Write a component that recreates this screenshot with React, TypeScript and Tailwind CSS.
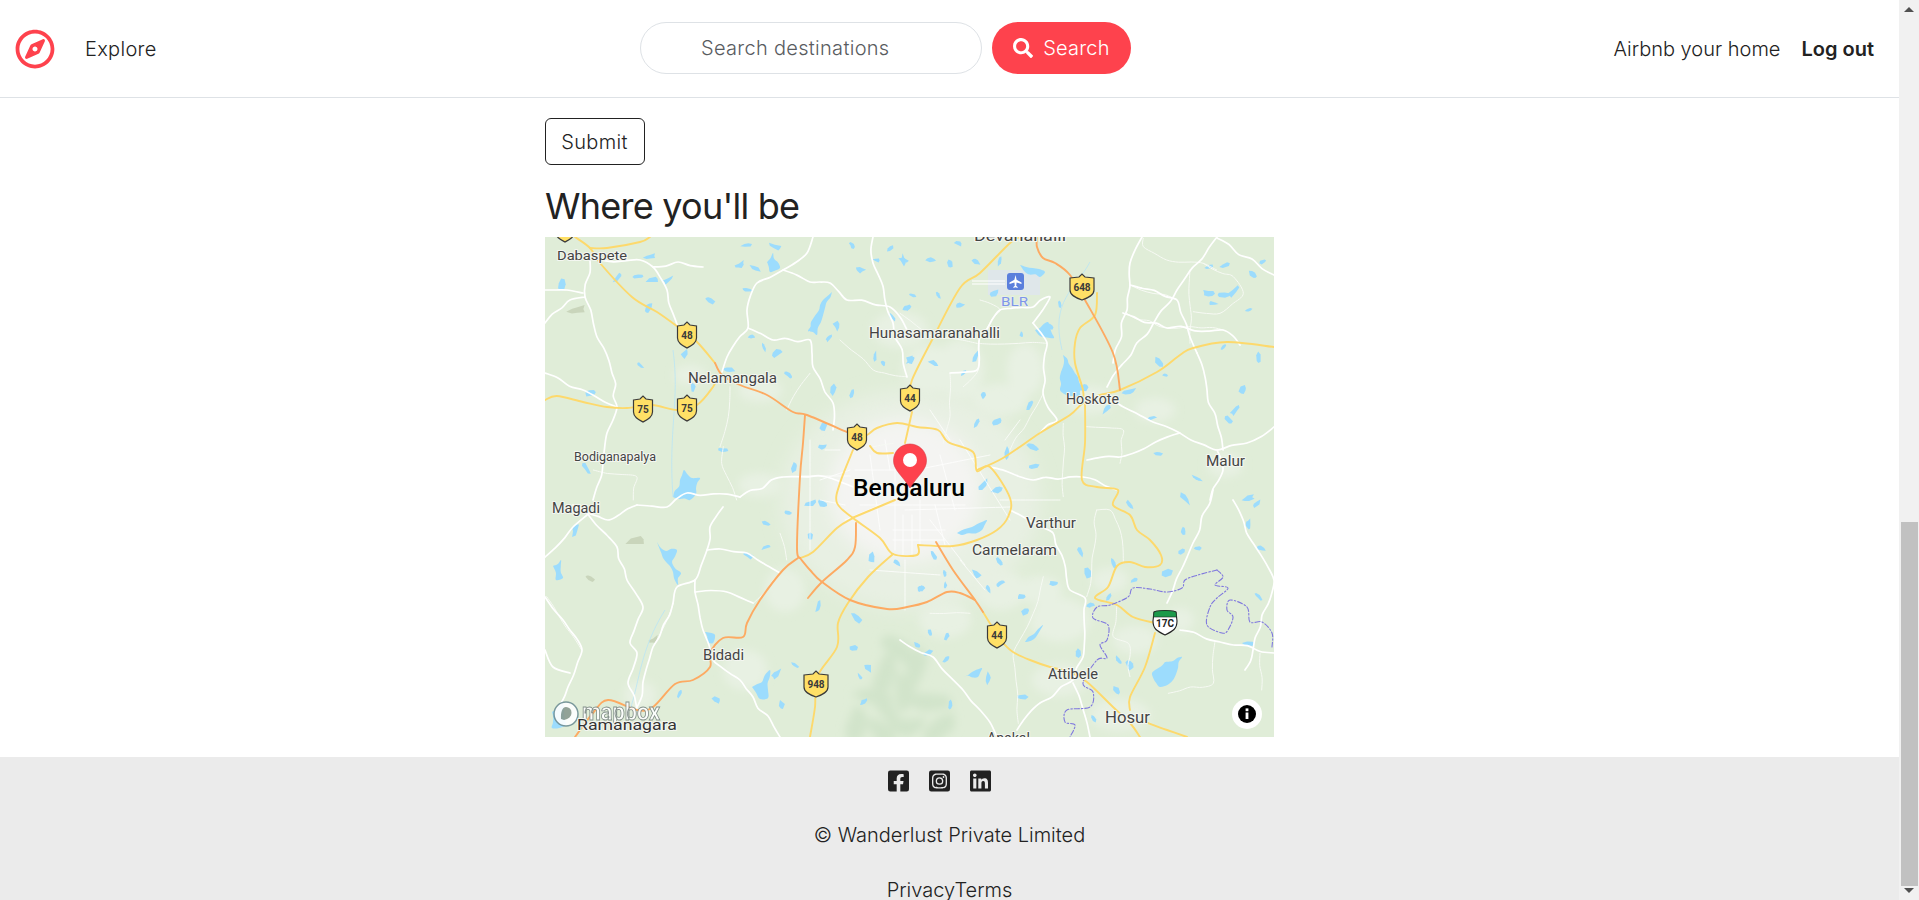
import React from 'react';
import { FaRegCompass, FaSearch, FaLinkedin, FaFacebookSquare, FaInstagramSquare } from 'react-icons/fa';

type Pt = number[];

const from = (ox: number, oy: number, pts: Pt[]) => pts.map(([x, y]) => [ox + x / 3, oy + y / 3]);

// small repeatable noise, so the map is drawn the same on every load
const noise = (n: number) => {
  const v = Math.sin(n * 127.1 + 311.7) * 43758.5453;
  return v - Math.floor(v);
};

// catmull-rom through the points
const smooth = (pts: Pt[]) => {
  let d = `M${pts[0][0].toFixed(1)},${pts[0][1].toFixed(1)}`;
  for (let i = 0; i < pts.length - 1; i++) {
    const p0 = pts[i - 1] || pts[i];
    const p1 = pts[i];
    const p2 = pts[i + 1];
    const p3 = pts[i + 2] || p2;
    const c1 = [p1[0] + (p2[0] - p0[0]) / 6, p1[1] + (p2[1] - p0[1]) / 6];
    const c2 = [p2[0] - (p3[0] - p1[0]) / 6, p2[1] - (p3[1] - p1[1]) / 6];
    d += ` C${c1[0].toFixed(1)},${c1[1].toFixed(1)} ${c2[0].toFixed(1)},${c2[1].toFixed(1)} ${p2[0].toFixed(1)},${p2[1].toFixed(1)}`;
  }
  return d;
};

// adds small bends to a long road
const wiggle = (pts: Pt[], seed: number, amp = 2.2, step = 13) => {
  const out: Pt[] = [pts[0]];
  for (let i = 0; i < pts.length - 1; i++) {
    const [ax, ay] = pts[i];
    const [bx, by] = pts[i + 1];
    const len = Math.hypot(bx - ax, by - ay);
    const n = Math.max(1, Math.round(len / step));
    for (let k = 1; k <= n; k++) {
      const t = k / n;
      const j = k === n ? 0 : amp * (noise(seed * 13 + i * 7 + k) - 0.5) * 2;
      out.push([ax + (bx - ax) * t + (-(by - ay) / len) * j, ay + (by - ay) * t + ((bx - ax) / len) * j]);
    }
  }
  return out;
};

const blob = (x: number, y: number, r: number, seed: number) => {
  const n = 6 + (seed % 3);
  const stretch = 0.6 + noise(seed) * 0.9;
  const rot = noise(seed + 4) * Math.PI;
  const pts: string[] = [];
  for (let i = 0; i < n; i++) {
    const a = (i / n) * Math.PI * 2;
    const rr = r * (0.55 + noise(seed * 3 + i) * 0.75);
    const px = Math.cos(a) * rr * (1 + stretch * 0.5);
    const py = Math.sin(a) * rr * (1 - stretch * 0.25);
    pts.push(`${(x + px * Math.cos(rot) - py * Math.sin(rot)).toFixed(1)},${(y + px * Math.sin(rot) + py * Math.cos(rot)).toFixed(1)}`);
  }
  return pts.join(' ');
};

const lakeShape = (pts: Pt[], seed: number) => {
  const closed = [...pts, pts[0]];
  return smooth(wiggle(closed, seed, 1.8, 6)) + 'Z';
};

const whiteRoads: Pt[][] = [
  [[590, 260], [585, 297], [597, 337], [612, 373], [617, 407], [607, 433], [603, 463], [593, 500]],
  [[545, 290], [567, 290], [583, 293]],
  [[545, 323], [570, 300], [585, 297]],
  [[545, 373], [583, 390], [617, 407]],
  [[600, 260], [640, 260], [653, 267], [667, 290], [678, 327]],
  [[653, 267], [678, 262], [703, 267]],
  [[813, 237], [807, 253], [783, 270], [757, 283], [747, 310], [748, 328], [727, 357], [722, 372]],
  [[748, 328], [773, 340], [810, 340], [813, 367], [833, 403], [833, 430]],
  [[783, 270], [810, 282], [830, 283], [847, 300], [890, 307], [907, 330]],
  [[873, 237], [873, 263], [893, 323], [907, 377]],
  [[740, 497], [783, 477], [830, 478], [853, 487]],
  [[545, 597], [563, 620], [582, 650], [568, 687], [560, 705]],
  [[587, 513], [617, 547], [627, 580], [643, 607], [630, 643], [637, 653], [628, 683], [637, 710]],
  [[637, 505], [608, 520], [588, 513], [573, 505]],
  [[637, 505], [667, 507], [687, 493], [740, 497]],
  [[545, 557], [573, 527], [587, 515]],
  [[723, 507], [710, 527], [707, 550], [695, 580], [677, 587], [673, 603], [653, 647], [637, 707]],
  [[707, 550], [747, 553], [780, 573]],
  [[695, 580], [695, 592], [703, 630], [713, 660], [740, 680], [753, 697], [780, 737]],
  [[695, 592], [727, 592], [753, 603]],
  [[545, 650], [553, 667], [570, 673]],
  [[1217, 237], [1177, 290], [1107, 387]],
  [[1142, 237], [1130, 263], [1127, 310], [1113, 363]],
  [[1217, 238], [1274, 275]],
  [[1113, 400], [1153, 422], [1217, 450], [1247, 443], [1274, 427]],
  [[1217, 450], [1223, 470], [1210, 500]],
  [[1033, 323], [1047, 343], [1043, 393], [1057, 420], [1040, 433]],
  [[1033, 323], [1050, 297], [1033, 307], [1000, 310], [980, 337], [977, 370], [950, 373]],
  [[990, 467], [1033, 480], [1083, 477], [1117, 490]],
  [[1087, 460], [1120, 457], [1180, 433]],
  [[1197, 353], [1207, 390], [1223, 450]],
  [[1123, 313], [1167, 328], [1223, 330], [1240, 345]],
  [[1130, 285], [1177, 300], [1190, 337], [1197, 353]],
  [[1010, 510], [1053, 533], [1070, 590], [1085, 598], [1083, 657], [1073, 680], [1040, 703], [1017, 730]],
  [[900, 640], [933, 657], [963, 690], [980, 710], [997, 737]],
  [[1180, 630], [1220, 642], [1274, 653]],
  [[1213, 490], [1193, 543], [1167, 603]],
  [[1233, 500], [1253, 543], [1274, 580], [1253, 650], [1245, 670]],
  [[1073, 683], [1090, 737]],
];

// minor roads, thinner than the white ones above
const minorRoads: Pt[][] = [
  from(900, 230, [[690, 165], [830, 210]]),
  from(900, 230, [[680, 250], [780, 290], [870, 290], [970, 300]]),
  from(900, 230, [[880, 245], [960, 250], [1030, 190], [1000, 140], [910, 100]]),
  from(900, 230, [[730, 25], [730, 50], [800, 90], [910, 100], [950, 120]]),
  from(900, 230, [[870, 120], [870, 340]]),
  from(900, 230, [[240, 210], [300, 240], [240, 320], [235, 420], [190, 470]]),
  from(900, 230, [[150, 430], [150, 560], [130, 640]]),
  from(900, 230, [[330, 660], [430, 490]]),
  from(900, 230, [[490, 580], [490, 800]]),
  from(900, 230, [[560, 590], [670, 600], [660, 700]]),
  from(900, 230, [[0, 250], [100, 320], [230, 340]]),
  from(900, 230, [[230, 340], [440, 340]]),
  from(900, 490, [[590, 60], [630, 60], [660, 120], [670, 220]]),
  from(900, 490, [[590, 60], [575, 240], [560, 320]]),
  from(900, 490, [[650, 350], [640, 440], [685, 460], [690, 560]]),
  from(900, 490, [[805, 610], [940, 580], [945, 455]]),
  from(900, 490, [[1080, 490], [1085, 600]]),
  from(900, 490, [[90, 370], [210, 370]]),
  from(900, 490, [[430, 260], [400, 370], [340, 490], [355, 700]]),
  from(540, 230, [[550, 650], [545, 700], [590, 810]]),
  from(540, 230, [[570, 470], [565, 560], [540, 650]]),
  from(540, 230, [[160, 720], [290, 740], [280, 810]]),
  from(540, 230, [[810, 430], [760, 500], [740, 540]]),
  from(540, 230, [[1000, 650], [1060, 640]]),
  from(540, 230, [[900, 330], [1000, 420], [1100, 440]]),
  from(540, 490, [[400, 340], [340, 470]]),
  from(540, 490, [[640, 340], [680, 300], [720, 250]]),
  from(540, 490, [[720, 130], [740, 210]]),
  from(540, 490, [[20, 320], [100, 440], [125, 480]]),
];

// thin streets inside the city
const cityStreets: Pt[][] = [
  [[800, 476], [850, 476]], [[905, 510], [1010, 507]], [[915, 470], [990, 455]], [[960, 440], [1010, 520]],
  [[870, 455], [880, 530]], [[895, 455], [895, 550]], [[920, 500], [920, 545]], [[935, 505], [945, 545]],
  [[845, 520], [880, 505]], [[893, 530], [945, 530]], [[893, 540], [945, 540]], [[903, 515], [903, 555]],
  [[912, 515], [912, 555]], [[930, 520], [965, 565]], [[810, 440], [810, 550]], [[820, 480], [850, 470]],
  [[820, 500], [845, 505]], [[825, 450], [840, 450]], [[870, 570], [940, 575]], [[905, 560], [905, 610]],
  [[960, 560], [985, 590]], [[1000, 500], [1060, 500]], [[1005, 440], [1020, 420]], [[930, 410], [950, 440]],
  [[855, 470], [900, 470]], [[860, 505], [965, 505]], [[940, 455], [955, 510]], [[885, 440], [890, 470]],
];

const yellowRoads: Pt[][] = [
  [[575, 237], [590, 248], [600, 263], [632, 297], [657, 312], [678, 327], [697, 342], [715, 363]],
  [[590, 248], [607, 248], [640, 242], [650, 237]],
  [[545, 400], [557, 396], [583, 402], [607, 407], [627, 408], [652, 405], [677, 410], [697, 405], [713, 387], [717, 378]],
  [[857, 437], [867, 435], [877, 428], [897, 423], [917, 427], [938, 430], [948, 442], [973, 452], [977, 471], [990, 467], [1010, 498], [1008, 517], [997, 530], [977, 540], [953, 546], [918, 545]],
  [[918, 545], [917, 555], [893, 554], [880, 538], [853, 518], [837, 503], [840, 483], [853, 450]],
  [[870, 446], [877, 453], [893, 453]],
  [[912, 412], [905, 443]],
  [[910, 397], [912, 380], [932, 340], [960, 288], [980, 273], [1010, 243], [1020, 237]],
  [[853, 518], [837, 528], [813, 552], [800, 558]],
  [[852, 518], [895, 500]],
  [[893, 554], [868, 577], [848, 603], [838, 623], [837, 647], [817, 677], [815, 707], [810, 737]],
  [[977, 470], [1003, 458], [1040, 433], [1070, 415], [1083, 403], [1100, 395], [1120, 390], [1157, 372], [1180, 355], [1193, 348], [1227, 342], [1274, 347]],
  [[1083, 403], [1083, 390], [1075, 363], [1075, 343], [1080, 328], [1095, 315], [1097, 293]],
  [[1085, 403], [1085, 443], [1082, 480], [1097, 487], [1118, 490], [1113, 505], [1130, 515], [1137, 530], [1150, 540], [1161, 555], [1160, 565], [1145, 567], [1130, 562], [1117, 566], [1108, 587], [1095, 598], [1117, 605], [1133, 617], [1155, 623]],
  [[1155, 633], [1145, 667], [1130, 697], [1130, 710]],
  [[1003, 643], [1013, 652], [1030, 660], [1050, 667], [1070, 672], [1087, 682], [1113, 707], [1130, 723], [1140, 737]],
  [[1148, 723], [1167, 730], [1187, 737]],
  [[983, 612], [997, 635]],
];

const orangeRoads: Pt[][] = [
  [[715, 363], [722, 375], [740, 385], [767, 395], [793, 412], [807, 415], [847, 432]],
  [[805, 415], [803, 443], [800, 477], [797, 547], [800, 558]],
  [[798, 558], [783, 570], [760, 600], [747, 623], [743, 637], [723, 638], [710, 653], [710, 667], [693, 680], [675, 684], [653, 707], [637, 710], [608, 700], [593, 713], [575, 737]],
  [[800, 558], [810, 570], [822, 582], [850, 600], [887, 609], [907, 607], [927, 602], [947, 592], [960, 593], [975, 600]],
  [[808, 598], [822, 582], [847, 560], [855, 547], [856, 523]],
  [[936, 542], [953, 570], [975, 600], [983, 612]],
  [[1037, 237], [1037, 247], [1043, 258], [1055, 263], [1070, 275], [1085, 300], [1113, 353], [1120, 390]],
];

const border: Pt[][] = [
  [[1217, 570], [1223, 577], [1215, 585], [1228, 588], [1217, 598], [1210, 607], [1207, 625], [1222, 633], [1228, 630], [1233, 617], [1227, 610], [1230, 600], [1247, 607], [1250, 622], [1262, 622], [1272, 633], [1272, 647]],
  [[1217, 570], [1198, 575], [1185, 580], [1182, 588], [1167, 592], [1150, 589], [1133, 588], [1128, 597], [1110, 605], [1097, 607], [1093, 618], [1108, 625], [1107, 640], [1100, 645], [1107, 658], [1097, 660], [1083, 683], [1093, 692], [1090, 707], [1067, 710], [1065, 722], [1075, 725], [1070, 737]],
];

const bigLakes: Pt[][] = [
  [[832, 292], [823, 300], [819, 310], [811, 322], [808, 331], [817, 335], [821, 322], [825, 308]],
  [[1063, 355], [1072, 368], [1082, 387], [1081, 398], [1070, 396], [1060, 390], [1061, 372]],
  [[673, 497], [680, 480], [684, 470], [692, 478], [700, 478], [696, 494], [690, 500]],
  [[657, 542], [666, 551], [677, 550], [672, 562], [681, 573], [678, 585], [673, 572], [663, 558]],
  [[553, 566], [561, 560], [563, 578], [556, 580]],
  [[705, 632], [715, 635], [713, 643], [707, 642]],
  [[752, 687], [762, 682], [770, 670], [768, 690], [768, 698], [760, 699]],
  [[957, 533], [972, 527], [987, 520], [982, 530], [962, 535]],
  [[1165, 662], [1173, 661], [1182, 657], [1178, 668], [1173, 680], [1160, 687], [1152, 673]],
  [[1025, 642], [1034, 634], [1043, 625], [1036, 637]],
  [[963, 677], [972, 672], [982, 668], [978, 677]],
  [[767, 262], [773, 253], [780, 268], [770, 272]],
  [[1035, 330], [1048, 322], [1054, 338], [1040, 336]],
  [[1020, 265], [1045, 272], [1040, 277], [1025, 272]],
  [[552, 712], [562, 702], [566, 725], [552, 728]],
];

const ponds: Pt[] = [
  ...from(540, 230, [[65, 165], [295, 140], [340, 150], [385, 150], [330, 80], [235, 140], [325, 235], [510, 210], [620, 45], [705, 50], [600, 105], [645, 115], [620, 180], [150, 490], [300, 405], [435, 370], [635, 320], [670, 350], [710, 370], [745, 435], [880, 480], [935, 490], [460, 470], [565, 420], [550, 660], [140, 715], [765, 710], [850, 650], [935, 45], [1050, 55], [1090, 90], [960, 120], [1010, 90], [1055, 260], [1100, 235], [1115, 195], [1110, 390], [1030, 400], [1005, 380], [890, 285], [865, 325], [850, 590]]),
  ...from(900, 230, [[150, 100], [230, 95], [300, 90], [95, 90], [10, 90], [175, 40], [115, 195], [180, 225], [20, 235], [450, 290], [365, 315], [480, 222], [280, 190], [250, 495], [190, 430], [100, 400], [35, 390], [225, 380], [390, 525], [290, 575], [230, 578], [400, 650], [320, 668], [400, 710], [250, 765], [290, 780], [775, 670], [890, 745], [1005, 540], [985, 570], [1030, 480], [1045, 240], [1090, 95], [1060, 135], [930, 110], [975, 105], [970, 195], [925, 190], [940, 220], [1000, 185], [690, 485], [620, 535], [795, 435], [970, 350], [1075, 385], [775, 395], [550, 475], [755, 565]]),
  ...from(540, 490, [[105, 120], [625, 195], [680, 170], [835, 350], [950, 385], [940, 475], [765, 525], [708, 552], [530, 630], [420, 610], [725, 645], [960, 560], [985, 535], [970, 635], [995, 205], [1070, 215], [745, 70], [680, 100], [810, 40], [845, 40], [810, 140]]),
  ...from(900, 490, [[60, 295], [135, 285], [230, 255], [265, 295], [300, 280], [365, 320], [375, 365], [460, 280], [540, 185], [565, 250], [640, 220], [800, 250], [705, 270], [850, 125], [845, 185], [895, 175], [1045, 105], [1085, 175], [1070, 40], [1045, 25], [855, 25], [690, 45], [1075, 320], [1050, 460], [265, 565], [140, 505], [90, 430], [140, 440], [50, 465], [80, 490], [365, 620], [150, 645], [535, 490], [655, 510], [690, 525], [580, 685], [650, 600], [570, 345], [625, 320], [300, 215], [100, 195], [65, 295], [135, 250]]),
];

const forest: Pt[] = [
  [900, 652], [917, 668], [884, 672], [905, 690], [872, 697], [930, 702], [890, 712], [860, 722], [912, 726], [880, 733], [938, 728],
];

const patches: number[][] = [
  [760, 390, 22, 12], [690, 375, 16, 10], [1090, 400, 24, 14], [1025, 370, 18, 26], [1000, 400, 28, 16], [960, 370, 24, 30],
  [1135, 640, 22, 14], [1110, 580, 18, 12], [1060, 620, 30, 22], [1000, 590, 26, 20], [1060, 680, 28, 16], [1120, 715, 30, 16],
  [745, 670, 22, 20], [785, 590, 20, 22], [1180, 620, 14, 12], [945, 620, 26, 18], [1040, 590, 22, 14],
  [760, 485, 22, 12], [640, 695, 16, 14], [900, 330, 28, 18], [930, 370, 28, 24], [1155, 410, 20, 12], [1225, 465, 18, 12],
];

const labels: [string, number, number, number, number][] = [
  ['Dabaspete', 557, 260, 70, 13.5],
  ['Devanahalli', 974, 241, 92, 14],
  ['Hunasamaranahalli', 869, 338, 131, 14],
  ['Nelamangala', 688, 383, 89, 14],
  ['Hoskote', 1066, 404, 53, 14],
  ['Bodiganapalya', 574, 461, 82, 12],
  ['Magadi', 552, 513, 48, 14],
  ['Malur', 1206, 466, 39, 14],
  ['Varthur', 1026, 528, 50, 14],
  ['Carmelaram', 972, 555, 85, 14],
  ['Bidadi', 703, 660, 41, 14],
  ['Attibele', 1048, 679, 50, 14],
  ['Hosur', 1105, 723, 45, 16.5],
  ['Anekal', 987, 743, 43, 14],
];

const shields: [string, number, number, boolean?][] = [
  ['', 565, 229],
  ['48', 687, 335],
  ['75', 643, 409],
  ['75', 687, 408],
  ['44', 910, 398],
  ['48', 857, 437],
  ['648', 1082, 287, true],
  ['948', 816, 684, true],
  ['44', 997, 635],
];

const Shield: React.FC<{ label: string; x: number; y: number; wide?: boolean }> = ({ label, x, y, wide }) => {
  const w = wide ? 12 : 9.5;
  return (
    <g transform={`translate(${x} ${y})`}>
      <path
        d={`M${-w},-9 L-3,-10 L0,-13 L3,-10 L${w},-9 L${w},3 C${w},8 ${w - 5},10.5 0,13 C${5 - w},10.5 ${-w},8 ${-w},3 Z`}
        fill="#ffe066"
        stroke="#3a3a3a"
        strokeWidth="1.2"
      />
      <text x="0" y="3.5" textAnchor="middle" fontSize="10" fontWeight="700" fill="#3a3a3a" fontFamily="Roboto, sans-serif">
        {label}
      </text>
    </g>
  );
};

const MapView: React.FC = () => {
  return (
    <svg viewBox="545 237 729 500" className="block w-[729px] h-[500px]" fontFamily="Roboto, sans-serif">
      <defs>
        <filter id="soft" x="-30%" y="-30%" width="160%" height="160%">
          <feGaussianBlur stdDeviation="4" />
        </filter>
        <filter id="softer" x="-30%" y="-30%" width="160%" height="160%">
          <feGaussianBlur stdDeviation="9" />
        </filter>
      </defs>
      <rect x="545" y="237" width="729" height="500" fill="#e0edd8" />

      {/* forest and hills */}
      <g fill="#d2e4cb" filter="url(#soft)">
        {forest.map(([x, y], i) => (
          <polygon key={i} points={blob(x, y, 14, i + 20)} />
        ))}
      </g>
      <g fill="#c9d5bb">
        <polygon points={blob(637, 541, 6, 3)} />
        <polygon points={blob(577, 310, 6, 5)} />
        <polygon points={blob(590, 578, 4, 8)} />
        <polygon points={blob(654, 640, 4, 11)} />
      </g>

      {/* built up areas */}
      <g fill="#e8f1e3" filter="url(#soft)">
        {patches.map(([x, y, rx, ry], i) => (
          <ellipse key={i} cx={x} cy={y} rx={rx} ry={ry} />
        ))}
      </g>
      <ellipse cx="910" cy="500" rx="130" ry="110" fill="#e8f0e3" filter="url(#softer)" />
      <ellipse cx="905" cy="490" rx="76" ry="72" fill="#f4f4f2" filter="url(#softer)" />

      {/* airport */}
      <rect x="988" y="270" width="52" height="25" fill="#dfe7ea" />
      <path d="M972,281 H1005 M972,284 H1005" stroke="#fff" strokeWidth="1.2" />

      {/* water */}
      <g fill="#9cdcfd">
        {bigLakes.map((pts, i) => (
          <path key={i} d={lakeShape(pts, i + 2)} />
        ))}
        {ponds.map(([x, y], i) => (
          <polygon key={i} points={blob(x, y, 2.6 + noise(i) * 1.8, i + 1)} />
        ))}
      </g>
      <path d="M673,350 C680,400 668,430 673,497 M665,610 C640,650 640,680 630,710 M1062,350 C1050,300 1075,290 1090,262" fill="none" stroke="#b9e5f5" strokeWidth="0.8" />

      {/* roads */}
      <g fill="none" strokeLinejoin="round" strokeLinecap="round">
        <g stroke="#fff" strokeWidth="0.9" opacity="0.85">
          {cityStreets.map((pts, i) => (
            <path key={i} d={smooth(pts)} />
          ))}
        </g>
        <g stroke="#f7faf4" strokeWidth="1">
          {minorRoads.map((pts, i) => (
            <path key={i} d={smooth(wiggle(pts, i + 50, 1.6))} />
          ))}
        </g>
        <g stroke="#fff" strokeWidth="1.7">
          {whiteRoads.map((pts, i) => (
            <path key={i} d={smooth(wiggle(pts, i + 1))} />
          ))}
        </g>
        <g stroke="#fdd96c" strokeWidth="1.9">
          {yellowRoads.map((pts, i) => (
            <path key={i} d={smooth(pts)} />
          ))}
        </g>
        <g stroke="#fdaa62" strokeWidth="1.9">
          {orangeRoads.map((pts, i) => (
            <path key={i} d={smooth(pts)} />
          ))}
        </g>
        <g stroke="#7f78de" strokeWidth="1.1" strokeDasharray="5 2 1.5 2">
          {border.map((pts, i) => (
            <path key={i} d={smooth(pts)} />
          ))}
        </g>
      </g>

      {/* mapbox mark sits under the labels */}
      <g opacity="0.9">
        <circle cx="566" cy="714" r="12" fill="#fff" stroke="#6f8f95" strokeWidth="1.5" />
        <path d="M566,707 a5.5,5.5 0 0 1 5.5,5.5 c0,4 -3,6.5 -7.5,7.5 l-3,-1 c-.5,-6 1,-12 5,-12Z" fill="#8a9a90" />
        <text x="582" y="720" fontSize="23" fontWeight="700" fill="#fff" stroke="#7d8a85" strokeWidth="0.9" textLength="78" lengthAdjust="spacingAndGlyphs">
          mapbox
        </text>
      </g>

      {/* place names */}
      <g fill="#444" stroke="#f4f7f1" strokeWidth="2" strokeLinejoin="round" style={{ paintOrder: 'stroke' }}>
        {labels.map(([name, x, y, w, size]) => (
          <text key={name} x={x} y={y} fontSize={size} textLength={w} lengthAdjust="spacingAndGlyphs">
            {name}
          </text>
        ))}
        <text x="577" y="730" fontSize="15" textLength="100" lengthAdjust="spacingAndGlyphs" fill="#333">
          Ramanagara
        </text>
        <text x="853" y="496" fontSize="24" fontWeight="500" fill="#000" textLength="112" lengthAdjust="spacingAndGlyphs">
          Bengaluru
        </text>
      </g>

      {/* highway shields */}
      {shields.map(([label, x, y, wide], i) => (
        <Shield key={i} label={label} x={x} y={y} wide={wide} />
      ))}
      <g transform="translate(1165 623)">
        <path d="M-11,-11 C-6,-13 6,-13 11,-11 L12,-2 C12,6 8,8 0,12 C-8,8 -12,6 -12,-2 Z" fill="#fff" stroke="#222" strokeWidth="1.1" />
        <path d="M-11,-11 C-6,-13 6,-13 11,-11 L11.6,-6 H-11.6 Z" fill="#1c9a4a" stroke="#222" strokeWidth="0.6" />
        <text x="0" y="4" textAnchor="middle" fontSize="10" fontWeight="700" fill="#222">
          17C
        </text>
      </g>

      {/* airport marker */}
      <rect x="1007" y="273" width="17" height="17" rx="3" fill="#5b7fdc" />
      <path d="M1015.5,275 L1016.6,279.8 L1021.5,282.6 V284 L1016.6,282.6 L1016.2,285.8 L1017.6,287 V288 L1015.5,287.2 L1013.4,288 V287 L1014.8,285.8 L1014.4,282.6 L1009.5,284 V282.6 L1014.4,279.8 Z" fill="#fff" />
      <text x="1001" y="306" fontSize="13" fill="#7e96e8" textLength="27" lengthAdjust="spacingAndGlyphs" stroke="#e8efea" strokeWidth="1.5" style={{ paintOrder: 'stroke' }}>
        BLR
      </text>

      {/* marker */}
      <path d="M910,488 C902,475 893.5,470 893.5,460.5 A16.5,16.5 0 0 1 926.5,460.5 C926.5,470 918,475 910,488Z" fill="#fe424d" stroke="#d63a44" strokeWidth="0.6" />
      <circle cx="910" cy="460" r="7" fill="#fff" />

      {/* attribution button */}
      <circle cx="1247" cy="714" r="15" fill="#fff" />
      <circle cx="1247" cy="714" r="9" fill="#000" />
      <rect x="1245.6" y="712.5" width="2.8" height="6.5" fill="#fff" />
      <rect x="1245.6" y="708.4" width="2.8" height="2.8" fill="#fff" />
    </svg>
  );
};

const App: React.FC = () => {
  return (
    <div className="flex h-screen w-full overflow-hidden bg-white text-[#222222] font-['Inter',sans-serif] text-[20px]">
      <div className="flex-1 min-w-0 flex flex-col">
        {/* Navbar */}
        <nav className="h-[98px] shrink-0 flex items-center border-b border-[#dee2e6] pl-[15px] pr-[25px]">
          <FaRegCompass className="w-10 h-10 text-[#fe424d]" />
          <a className="ml-[30px] w-[71px] font-light tracking-[0.3px]">Explore</a>
          <div className="ml-[484px] -mt-px flex items-center gap-[10px]">
            <div className="w-[342px] h-[52px] rounded-full border border-[#dee2e6] flex items-center pl-[60px] text-[#595c5f] font-light tracking-[0.3px]">
              Search destinations
            </div>
            <button className="w-[139px] h-[52px] rounded-full bg-[#fe424d] text-white flex items-center justify-center gap-[10px] font-light tracking-[0.2px]">
              <FaSearch className="w-5 h-5" />
              Search
            </button>
          </div>
          <div className="ml-auto flex items-center gap-[21px]">
            <a className="font-light">Airbnb your home</a>
            <a className="font-semibold">Log out</a>
          </div>
        </nav>

        {/* Map section */}
        <main className="flex-1 pt-5 pl-[545px]">
          <button className="w-[100px] h-[47px] rounded-md border border-[#222222] font-light tracking-[0.3px] -indent-px">Submit</button>
          <h3 className="mt-[15px] mb-[4px] text-[36px] leading-[53px] font-normal tracking-[-0.75px]">Where you'll be</h3>
          <div className="w-[729px] h-[500px]">
            <MapView />
          </div>
        </main>

        {/* Footer */}
        <footer className="h-[143px] shrink-0 bg-[#ebebeb] overflow-hidden pt-[12px] flex flex-col items-center">
          <div className="flex text-[#222222] h-6 items-center">
            <FaFacebookSquare className="w-[21px] h-6 mr-5" />
            <FaInstagramSquare className="w-[21px] h-6 mr-5" />
            <FaLinkedin className="w-[21px] h-6 mr-5" />
          </div>
          <div className="mt-[27px] font-light leading-[30px]">© Wanderlust Private Limited</div>
          <div className="mt-[25px] font-light leading-[30px]">
            <a>Privacy</a>
            <a>Terms</a>
          </div>
        </footer>
      </div>

      {/* Scrollbar */}
      <div className="w-5 shrink-0 bg-[#f1f1f1] flex flex-col items-center">
        <div className="mt-[7px] w-0 h-0 border-x-[5px] border-x-transparent border-b-[5px] border-b-[#505050]" />
        <div className="mt-[510px] w-[17px] h-[364px] bg-[#c1c1c1]" />
        <div className="mt-[2px] w-0 h-0 border-x-[5px] border-x-transparent border-t-[5px] border-t-[#505050]" />
      </div>
    </div>
  );
};

export default App;
